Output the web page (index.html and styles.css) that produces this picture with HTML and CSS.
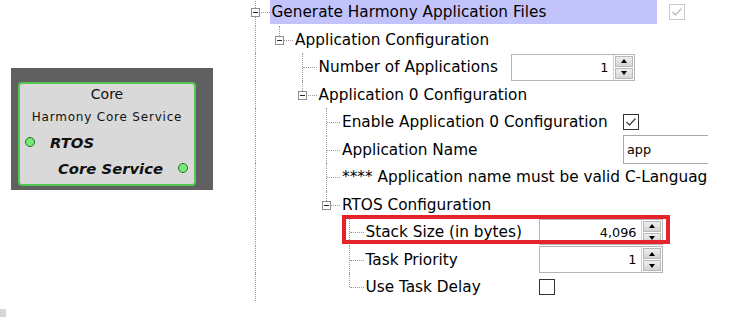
FILE: index.html
```html
<!DOCTYPE html>
<html lang="en">
<head>
  <meta charset="UTF-8">
  <meta name="viewport" content="width=device-width, initial-scale=1.0">
  <title>Harmony Configurator</title>
  <link rel="stylesheet" href="styles.css">
</head>
<body>
  <div class="graph">
    <div class="canvas">
      <div class="node">
        <div class="node-title">Core</div>
        <div class="node-sub">Harmony Core Service</div>
        <div class="port port-in"><span class="dot"></span>RTOS</div>
        <div class="port port-out">Core Service<span class="dot"></span></div>
      </div>
    </div>
    <div class="corner"></div>
  </div>

  <div class="tree">
    <div class="row">
      <span class="g tee"><i class="box"></i></span>
      <span class="label w-top selected">Generate Harmony Application Files</span>
      <span class="check disabled"><svg viewBox="0 0 14 14"><path d="M2.5 7 L5.5 10 L11.5 3.5"/></svg></span>
    </div>
    <div class="row">
      <span class="g line"></span>
      <span class="g end"><i class="box"></i></span>
      <span class="label">Application Configuration</span>
    </div>
    <div class="row">
      <span class="g line"></span><span class="g"></span>
      <span class="g tee"></span>
      <span class="label w-apps">Number of Applications</span>
      <span class="spinner">
        <span class="spin-value">1</span>
        <span class="spin-btns"><span class="up"></span><span class="down"></span></span>
      </span>
    </div>
    <div class="row">
      <span class="g line"></span><span class="g"></span>
      <span class="g end"><i class="box"></i></span>
      <span class="label">Application 0 Configuration</span>
    </div>
    <div class="row">
      <span class="g line"></span><span class="g"></span><span class="g"></span>
      <span class="g tee"></span>
      <span class="label w-app0">Enable Application 0 Configuration</span>
      <span class="check"><svg viewBox="0 0 14 14"><path d="M2.5 7 L5.5 10 L11.5 3.5"/></svg></span>
    </div>
    <div class="row">
      <span class="g line"></span><span class="g"></span><span class="g"></span>
      <span class="g tee"></span>
      <span class="label w-app0">Application Name</span>
      <span class="field">app</span>
    </div>
    <div class="row">
      <span class="g line"></span><span class="g"></span><span class="g"></span>
      <span class="g tee"></span>
      <span class="label">**** Application name must be valid C-Language identifier</span>
    </div>
    <div class="row">
      <span class="g line"></span><span class="g"></span><span class="g"></span>
      <span class="g end"><i class="box"></i></span>
      <span class="label">RTOS Configuration</span>
    </div>
    <div class="row">
      <span class="g line"></span><span class="g"></span><span class="g"></span><span class="g"></span>
      <span class="g tee"></span>
      <span class="label w-rtos">Stack Size (in bytes)</span>
      <span class="spinner short">
        <span class="spin-value">4,096</span>
        <span class="spin-btns"><span class="up"></span><span class="down"></span></span>
      </span>
      <div class="callout"></div>
    </div>
    <div class="row">
      <span class="g line"></span><span class="g"></span><span class="g"></span><span class="g"></span>
      <span class="g tee"></span>
      <span class="label w-rtos">Task Priority</span>
      <span class="spinner">
        <span class="spin-value">1</span>
        <span class="spin-btns"><span class="up"></span><span class="down"></span></span>
      </span>
    </div>
    <div class="row">
      <span class="g line"></span><span class="g"></span><span class="g"></span><span class="g"></span>
      <span class="g end"></span>
      <span class="label w-rtos">Use Task Delay</span>
      <span class="check"></span>
    </div>
  </div>
</body>
</html>
```

FILE: styles.css
```css
body {
  margin: 0;
  display: flex;
  height: 100vh;
  overflow: hidden;
  background: #ffffff;
  font-family: "DejaVu Sans", sans-serif;
  color: #000000;
}

/* Left: component graph */
.graph {
  width: 244px;
  flex: none;
  display: flex;
  flex-direction: column;
}

.canvas {
  margin: 68px 0 0 11px;
  width: 202px;
  height: 122px;
  box-sizing: border-box;
  padding: 14px 0 0 7px;
  background: #606060;
}

.node {
  width: 178px;
  height: 104px;
  box-sizing: border-box;
  border: 2px solid #52c852;
  border-radius: 4px;
  background: #d9d9d9;
  color: #111111;
}

.node-title {
  text-align: center;
  font-size: 14px;
  line-height: 20px;
}

.node-sub {
  text-align: center;
  font-size: 12px;
  letter-spacing: 0.8px;
  line-height: 26px;
}

.port {
  display: flex;
  align-items: center;
  font-size: 14.8px;
  font-weight: bold;
  font-style: italic;
}

.port-in {
  height: 24px;
  padding-left: 5px;
  gap: 15px;
}

.port-out {
  height: 28px;
  justify-content: flex-end;
  padding-right: 6px;
  gap: 15px;
}

.dot {
  width: 10px;
  height: 10px;
  box-sizing: border-box;
  border-radius: 50%;
  border: 1px solid #2e6b2e;
  background: #74ec74;
}

.corner {
  margin-top: auto;
  width: 6px;
  height: 8px;
  background: #d6d6d6;
}

/* Right: configuration tree */
.tree {
  width: 464px;
  flex: none;
  overflow: hidden;
  margin-top: -1.75px;
  font-size: 15.3px;
}

.row {
  position: relative;
  display: flex;
  align-items: center;
  height: 27.5px;
  white-space: nowrap;
}

.g {
  position: relative;
  flex: none;
  width: 23.5px;
  align-self: stretch;
}

.g.line::before,
.g.tee::before,
.g.end::before {
  content: "";
  position: absolute;
  left: 11px;
  top: 0;
  bottom: 0;
  border-left: 1px dotted #9a9a9a;
}

.g.end::before {
  bottom: 50%;
}

.g.tee::after,
.g.end::after {
  content: "";
  position: absolute;
  left: 12px;
  right: -2px;
  top: 50%;
  border-top: 1px dotted #9a9a9a;
}

.box {
  position: absolute;
  z-index: 1;
  left: 7px;
  top: calc(50% - 4px);
  width: 9px;
  height: 9px;
  box-sizing: border-box;
  border: 1px solid #8e8e8e;
  background: #ffffff;
}

.box::after {
  content: "";
  position: absolute;
  left: 1px;
  top: 3px;
  width: 5px;
  height: 1px;
  background: #222222;
}

.label {
  flex: none;
  box-sizing: border-box;
  margin-left: 2px;
  padding-left: 2px;
  line-height: 24px;
}

.selected {
  background: #c3c3fb;
  margin-right: 12px;
}

.w-top { width: 387px; }
.w-apps { width: 194px; }
.w-app0 { width: 283px; }
.w-rtos { width: 175px; }

.check {
  flex: none;
  width: 16px;
  height: 16px;
  box-sizing: border-box;
  border: 1px solid #333333;
  background: #ffffff;
  color: #444444;
}

.check svg {
  display: block;
  width: 14px;
  height: 14px;
  fill: none;
  stroke: currentColor;
  stroke-width: 1.3;
}

.check.disabled {
  border-color: #cacaca;
  color: #bdbdbd;
}

.spinner {
  flex: none;
  display: flex;
  width: 124px;
  height: 27px;
  box-sizing: border-box;
  border: 1px solid #b5b5b5;
  background: #ffffff;
  font-size: 12.8px;
}

.spinner.short {
  height: 26px;
}

.spin-value {
  flex: 1;
  align-self: center;
  text-align: right;
  padding-right: 4px;
}

.spin-btns {
  width: 21px;
  display: flex;
  flex-direction: column;
  gap: 1px;
  padding: 1px;
  box-sizing: border-box;
  border-left: 1px solid #d0d0d0;
}

.spin-btns span {
  flex: 1;
  display: flex;
  align-items: center;
  justify-content: center;
  border: 1px solid #b8b8b8;
  background: linear-gradient(#eeeeee, #d4d4d4);
}

.up::before,
.down::before {
  content: "";
  border-left: 3.5px solid transparent;
  border-right: 3.5px solid transparent;
}

.up::before {
  border-bottom: 4px solid #000000;
}

.down::before {
  border-top: 4px solid #000000;
}

.field {
  flex: none;
  width: 110px;
  height: 29px;
  box-sizing: border-box;
  border: 1px solid #a9a9a9;
  border-right: none;
  padding-left: 3px;
  line-height: 27px;
  font-size: 12.8px;
}

/* annotation drawn over the row */
.callout {
  position: absolute;
  left: 98px;
  top: -3px;
  width: 328px;
  height: 29px;
  box-sizing: border-box;
  border: 4px solid #e3242b;
  pointer-events: none;
}
```
